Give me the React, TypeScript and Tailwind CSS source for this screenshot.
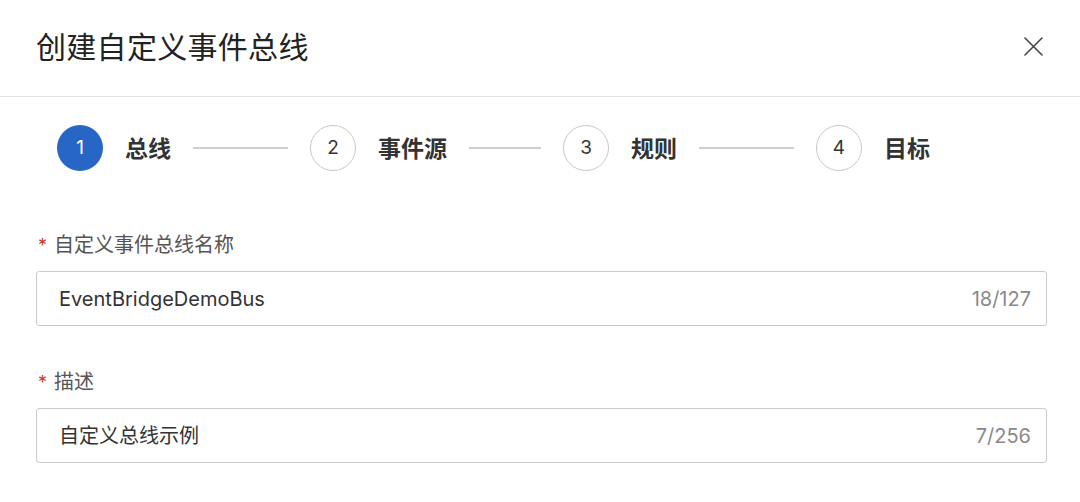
// ==================== Data ====================

const steps = [
    { id: 1, label: "总线" },
    { id: 2, label: "事件源" },
    { id: 3, label: "规则" },
    { id: 4, label: "目标" },
];

const fields = [
    { label: "自定义事件总线名称", value: "EventBridgeDemoBus", count: "18/127" },
    { label: "描述", value: "自定义总线示例", count: "7/256" },
];

const font = "font-['Inter','Noto_Sans_CJK_SC',sans-serif]";

// ==================== Component ====================

export default function App() {
    return (
        <div className={`w-[1080px] h-[502px] bg-white overflow-hidden ${font}`}>
            {/* Header */}
            <div className="h-[97px] flex items-center justify-between pl-[36px] pr-[37px] border-b-[1.5px] border-[#e3e3e3]">
                <h1 className="text-[30px] leading-none text-[#222] tracking-[0.3px] -mt-[2px]">创建自定义事件总线</h1>
                <svg width="19" height="19" viewBox="0 0 19 19" className="text-[#444] -mt-[4px]">
                    <path d="M1 1L18 18M18 1L1 18" stroke="currentColor" strokeWidth="1.6" strokeLinecap="round" />
                </svg>
            </div>

            {/* Steps */}
            <div className="grid grid-cols-4 pl-[57px] pr-[11px] pt-[28px]">
                {steps.map((s) => (
                    <div key={s.id} className="flex items-center">
                        <div
                            className={
                                s.id === 1
                                    ? "w-[46px] h-[46px] shrink-0 rounded-full bg-[#2866c6] text-white flex items-center justify-center text-[19px]"
                                    : "w-[46px] h-[46px] shrink-0 rounded-full border-[1.5px] border-[#c8c8c8] text-[#333] flex items-center justify-center text-[19px]"
                            }
                        >
                            {s.id}
                        </div>
                        <span className="ml-[22px] text-[23px] font-bold text-[#333] whitespace-nowrap mt-[2px]">{s.label}</span>
                        {s.id < 4 && <div className="flex-1 h-[1.5px] bg-[#cfcfcf] mx-[22px]" />}
                    </div>
                ))}
            </div>

            {/* Form */}
            <div className="pl-[36px] pr-[33px] pt-[60px] flex flex-col gap-[42px]">
                {fields.map((f) => (
                    <div key={f.label}>
                        <div className="flex items-center h-[28px] text-[20px] text-[#555]">
                            <span className="text-[#c33a2e] text-[18px] ml-[2px] mr-[7px]">*</span>
                            {f.label}
                        </div>
                        <div className="mt-[12px] h-[55px] border-[1.5px] border-[#cbcbcb] rounded-[3px] flex items-center justify-between pl-[22px] pr-[15px]">
                            <span className="text-[20px] text-[#333]">{f.value}</span>
                            <span className="text-[20px] text-[#8a8a8a]">{f.count}</span>
                        </div>
                    </div>
                ))}
            </div>
        </div>
    );
}
